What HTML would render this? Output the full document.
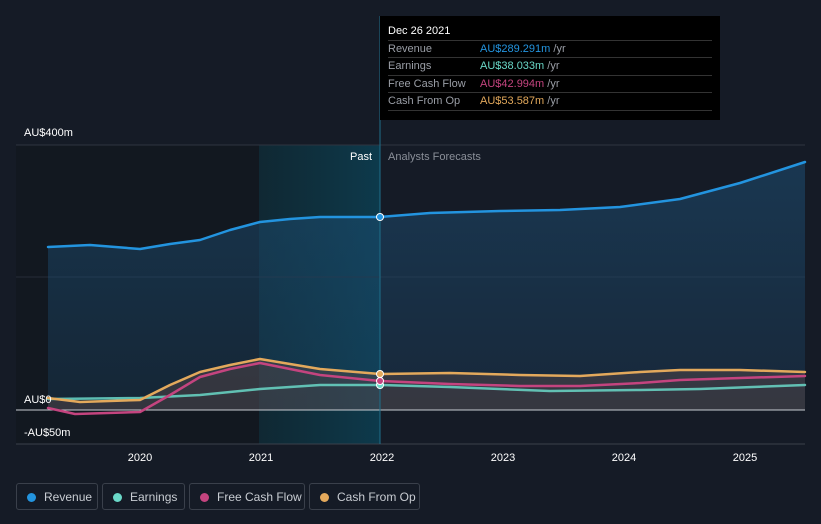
<!DOCTYPE html>
<html><head><meta charset="utf-8"><style>
body{margin:0;background:#151b26;width:821px;height:524px;overflow:hidden;font-family:"Liberation Sans",sans-serif;}
svg{position:absolute;left:0;top:0}
.tt{position:absolute;left:380px;top:16px;width:340px;height:104px;background:#000;color:#fff;font-size:11px}
.tt .h{position:absolute;left:8px;top:9px;font-size:11px}
.row{position:absolute;left:8px;width:324px;height:17px;border-top:1px solid #333;line-height:17px;color:#9a9ea6}
.row span{position:absolute;left:92px}
.row i{font-style:normal;color:#9a9ea6}
.lg{position:absolute;top:483px;height:27px;border:1px solid #3a404b;border-radius:3px;color:#c8ccd2;font-size:12px;line-height:27px;box-sizing:border-box;padding-left:27px}
.lg b{position:absolute;left:10px;top:9px;width:9px;height:9px;border-radius:50%}
</style></head><body>
<svg width="821" height="524">
<defs>
<linearGradient id="hl" x1="0" x2="1"><stop offset="0" stop-color="#0e3340" stop-opacity=".6"/><stop offset="1" stop-color="#0d3a4c"/></linearGradient>
<linearGradient id="rv" x1="0" y1="0" x2="0" y2="1"><stop offset="0" stop-color="#1d4e74" stop-opacity=".55"/><stop offset="1" stop-color="#1d4e74" stop-opacity=".25"/></linearGradient>
</defs>
<rect x="16" y="145" width="364" height="299" fill="#121820"/>
<rect x="259" y="145" width="121" height="299" fill="url(#hl)"/>
<line x1="16" y1="145" x2="805" y2="145" stroke="#2e3440"/>
<line x1="16" y1="277" x2="805" y2="277" stroke="#262c38"/>
<path d="M48,247 L90,245 L140,249 L170,244 L200,240 L230,230 L260,222 L290,219 L320,217 L380,217 L430,213 L500,211 L560,210 L620,207 L680,199 L740,183 L805,162 L805,410 L48,410Z" fill="url(#rv)"/>
<path d="M48,398 L80,402 L140,400 L170,385 L200,372 L230,365 L260,359 L290,364 L320,369 L380,374 L450,373 L520,375 L580,376 L640,372 L680,370 L740,370 L805,372 L805,410 L48,410Z" fill="#5a4a4a" opacity=".45"/>
<line x1="16" y1="410" x2="805" y2="410" stroke="#c8ccd2" stroke-width="1"/>
<line x1="16" y1="444" x2="805" y2="444" stroke="#3a404b"/>
<line x1="380" y1="16" x2="380" y2="444" stroke="#1e6f8a"/>
<g fill="none" stroke-width="2.5" stroke-linejoin="round" stroke-linecap="round">
<path d="M48,247 L90,245 L140,249 L170,244 L200,240 L230,230 L260,222 L290,219 L320,217 L380,217 L430,213 L500,211 L560,210 L620,207 L680,199 L740,183 L805,162" stroke="#2394df"/>
<path d="M48,399 L140,398 L200,395 L260,389 L320,385 L380,385 L450,387 L550,391 L640,390 L700,389 L805,385" stroke="#6ad8c8" opacity=".85"/>
<path d="M48,408 L75,414 L140,412 L170,395 L200,377 L230,369 L260,363 L290,369 L320,375 L380,381 L450,384 L520,386 L580,386 L640,383 L680,380 L740,378 L805,376" stroke="#c4447f"/>
<path d="M48,398 L80,402 L140,400 L170,385 L200,372 L230,365 L260,359 L290,364 L320,369 L380,374 L450,373 L520,375 L580,376 L640,372 L680,370 L740,370 L805,372" stroke="#e3a95c"/>
</g>
<circle cx="380" cy="217" r="3.5" fill="#2394df" stroke="#fff"/>
<circle cx="380" cy="385" r="3.5" fill="#6ad8c8" stroke="#fff"/>
<circle cx="380" cy="381" r="3.5" fill="#c4447f" stroke="#fff"/>
<circle cx="380" cy="374" r="3.5" fill="#e3a95c" stroke="#fff"/>
<g font-family="Liberation Sans" font-size="11" fill="#fff">
<text x="24" y="136">AU$400m</text>
<text x="24" y="403">AU$0</text>
<text x="24" y="436">-AU$50m</text>
<text x="372" y="160" text-anchor="end">Past</text>
<text x="388" y="160" fill="#8a8f98">Analysts Forecasts</text>
<g text-anchor="middle"><text x="140" y="461">2020</text><text x="261" y="461">2021</text><text x="382" y="461">2022</text><text x="503" y="461">2023</text><text x="624" y="461">2024</text><text x="745" y="461">2025</text></g>
</g>
</svg>
<div class="tt"><div class="h">Dec 26 2021</div>
<div class="row" style="top:24px">Revenue<span><font color="#2394df">AU$289.291m</font> <i>/yr</i></span></div>
<div class="row" style="top:41px">Earnings<span><font color="#6ad8c8">AU$38.033m</font> <i>/yr</i></span></div>
<div class="row" style="top:59px">Free Cash Flow<span><font color="#c4447f">AU$42.994m</font> <i>/yr</i></span></div>
<div class="row" style="top:76px;border-bottom:1px solid #333">Cash From Op<span><font color="#e3a95c">AU$53.587m</font> <i>/yr</i></span></div>
</div>
<div class="lg" style="left:16px;width:82px"><b style="background:#2394df"></b>Revenue</div>
<div class="lg" style="left:102px;width:83px"><b style="background:#6ad8c8"></b>Earnings</div>
<div class="lg" style="left:189px;width:116px"><b style="background:#c4447f"></b>Free Cash Flow</div>
<div class="lg" style="left:309px;width:111px"><b style="background:#e3a95c"></b>Cash From Op</div>
</body></html>
